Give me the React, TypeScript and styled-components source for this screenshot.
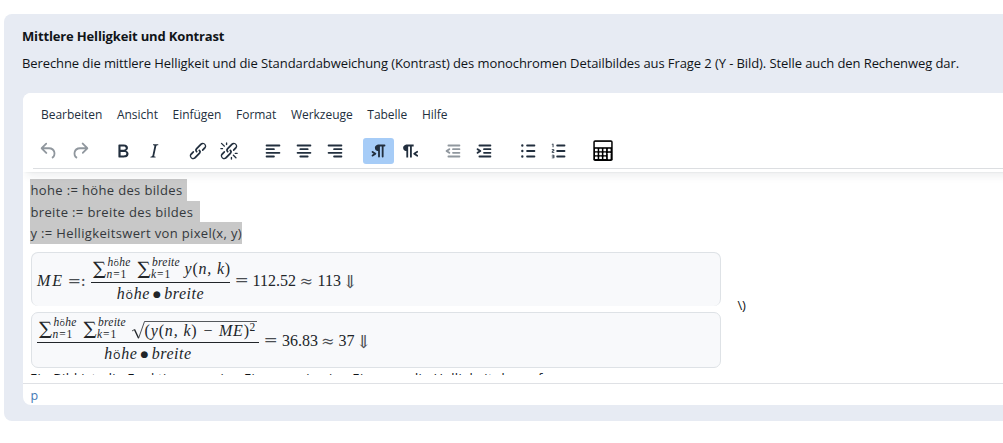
import React from 'react';
import styled, { createGlobalStyle, css } from 'styled-components';

const Global = createGlobalStyle`
  * { box-sizing: border-box; }
  html, body { margin: 0; background: #fff; overflow: hidden; }
  body { font-family: "Open Sans", "Noto Sans", sans-serif; color: #101418; }
`;

const Page = styled.main`
  height: 443px;
  padding: 14px 0 22px 4px;
  overflow: hidden;
`;

const Card = styled.section`
  height: 407px;
  padding: 12px 0 16px 18px;
  border-radius: 8px 0 0 8px;
  background: #e7ebf3;
`;

const Title = styled.h1`
  margin: 0;
  height: 20px;
  font-size: 13px;
  line-height: 20px;
  font-weight: 700;
  letter-spacing: -0.15px;
  white-space: nowrap;
`;

const Question = styled.p`
  margin: 7px 0 20px;
  height: 20px;
  font-size: 13px;
  line-height: 20px;
  letter-spacing: -0.088px;
  white-space: nowrap;
`;

const Editor = styled.div`
  display: flex;
  flex-direction: column;
  height: 312px;
  margin-left: 1px;
  border-radius: 8px 0 0 8px;
  background: #fff;
  overflow: hidden;
`;

const Header = styled.header`
  position: relative;
  z-index: 1;
  flex: none;
  height: 79px;
  margin-right: -12px;
  background: #fff;
  box-shadow: 0 2px 2px -2px rgba(34, 47, 62, 0.1), 0 8px 8px -4px rgba(34, 47, 62, 0.08);
`;

const MenuBar = styled.nav`
  display: flex;
  gap: 14.6px;
  height: 43px;
  padding: 13px 0 0 18px;
`;

const MenuItem = styled.span`
  font-size: 12px;
  line-height: 18px;
  letter-spacing: -0.02px;
  color: #222f3e;
  white-space: nowrap;
`;

const Toolbar = styled.div`
  display: flex;
  gap: 12.8px;
  height: 33px;
  margin-left: 10px;
  padding-top: 2px;
  border-bottom: 1px solid #dcdee1;
`;

const Group = styled.div`
  display: flex;
`;

const ToolButton = styled.button<{ $active?: boolean; $muted?: boolean }>`
  display: flex;
  align-items: center;
  justify-content: center;
  width: 31px;
  height: 26px;
  padding: 0;
  border: 0;
  border-radius: 3px;
  background: ${p => (p.$active ? '#a6ccf7' : 'transparent')};
  color: ${p => (p.$muted ? 'rgba(34, 47, 62, 0.5)' : '#222f3e')};
`;

const Glyph = styled.svg`
  display: block;
  flex: none;
  width: 22px;
  height: 22px;
  fill: currentColor;
`;

const Content = styled.div`
  display: flex;
  flex: none;
  height: 203px;
  padding: 7px 0 0 7px;
  overflow: hidden;
`;

const Document = styled.div`
  width: 691px;
  flex: none;
`;

const Line = styled.p`
  display: flex;
  margin: 0;
  height: 21.6px;
`;

const Selected = styled.span<{ $tail?: number }>`
  height: 22px;
  padding: 0 ${p => p.$tail ?? 0}px 0 0.5px;
  background: #c8c8c8;
  color: #34383c;
  font-size: 13px;
  line-height: 22.5px;
  letter-spacing: 0.35px;
  white-space: pre;
`;

const Formula = styled.div<{ $open?: boolean }>`
  display: flex;
  align-items: flex-start;
  height: ${p => (p.$open ? 54.2 : 56)}px;
  margin: ${p => (p.$open ? '8px 0 5.8px 1px' : '0 0 0 1px')};
  padding-left: 5px;
  border: 1px solid #dee2e6;
  ${p => p.$open && css`border-bottom-width: 0;`}
  border-radius: 7px;
  background: #f8f9fb;
  color: #212529;
  font-family: "Liberation Serif", "Times New Roman", serif;
  font-size: 16px;
  line-height: 18px;
  white-space: nowrap;
`;

const Inline = styled.span`
  display: flex;
  padding-top: 19px;
`;

const Atom = styled.span<{ $w: number; $italic?: boolean; $track?: number }>`
  flex: none;
  width: ${p => p.$w}px;
  font-style: ${p => (p.$italic ? 'italic' : 'normal')};
  letter-spacing: ${p => p.$track ?? 0}px;
`;

const Operator = styled(Atom)`
  font-family: "DejaVu Math TeX Gyre", "DejaVu Serif", serif;
  height: 18px;
  color: #4a4e52;
`;

const Equals = styled(Operator)`
  padding-left: 5px;
  font-size: 17px;
`;

const Fraction = styled.span<{ $w: number }>`
  display: flex;
  flex-direction: column;
  flex: none;
  width: ${p => p.$w}px;
`;

const Numerator = styled.span`
  display: flex;
  height: 30px;
  border-bottom: 1px solid #212529;
  padding-left: 1px;
`;

const Denominator = styled.span`
  display: flex;
  justify-content: center;
  padding-top: 2px;
`;

const Bullet = styled.span`
  width: 14.5px;
  font-family: "DejaVu Serif", serif;
  font-size: 9px;
  text-align: center;
`;

const SumSign = styled.span`
  flex: none;
  width: 15.5px;
  height: 29px;
  padding-top: 8px;
  font-family: "DejaVu Math TeX Gyre", "DejaVu Serif", serif;
  font-size: 15.5px;
  line-height: 18px;
`;

const Scripts = styled.span<{ $w: number }>`
  display: flex;
  flex-direction: column;
  flex: none;
  width: ${p => p.$w}px;
  padding-top: 3px;
  font-size: 11.5px;
  line-height: 12px;
  font-style: italic;
  letter-spacing: 0.25px;
`;

const Lower = styled.span`
  margin-left: -1px;
  letter-spacing: 0.9px;
`;

const Upright = styled.span`
  font-style: normal;
`;

const Umlaut = styled.span`
  font-family: "Open Sans", sans-serif;
  font-style: normal;
  font-size: 0.78em;
  line-height: 1;
`;

const Body = styled(Atom)`
  padding-top: 7px;
`;

const Root = styled.svg`
  display: block;
  flex: none;
  width: 14px;
  height: 29px;
  fill: none;
  stroke: #212529;
`;

const Radicand = styled.span`
  display: flex;
  width: 112px;
  height: 20px;
  margin-top: 8px;
  border-top: 1px solid #55595d;
  line-height: 17px;
`;

const Power = styled.span`
  font-size: 11.5px;
  line-height: 11px;
`;

const Clipped = styled.p`
  margin: 0;
  height: 22px;
  font-size: 13px;
  line-height: 20px;
  letter-spacing: 0.35px;
  white-space: pre;
`;

const Closing = styled.span`
  margin: 116px 0 0 16.5px;
  font-size: 13px;
  line-height: 20px;
  letter-spacing: -0.2px;
`;

const StatusBar = styled.footer`
  flex: none;
  margin-top: 8px;
  height: 22px;
  padding-left: 7.5px;
  border-top: 1px solid #dfe1e5;
  font-size: 12.5px;
  line-height: 24px;
  color: #4478b6;
`;

const paths = {
  undo: 'M6.4 8H12c3.7 0 6.2 2 6.8 5.1.6 2.7-.4 5.6-2.3 6.8a1 1 0 0 1-1-1.8c1.1-.6 1.8-2.7 1.4-4.6-.5-2.1-2.1-3.5-4.9-3.5H6.4l3.3 3.3a1 1 0 1 1-1.4 1.4l-5-5a1 1 0 0 1 0-1.4l5-5a1 1 0 0 1 1.4 1.4L6.4 8z',
  redo: 'M17.6 10H12c-2.8 0-4.4 1.4-4.9 3.5-.4 2 .3 4 1.4 4.6a1 1 0 1 1-1 1.8c-2-1.2-2.9-4.1-2.3-6.8.6-3 3-5.1 6.8-5.1h5.6l-3.3-3.3a1 1 0 1 1 1.4-1.4l5 5a1 1 0 0 1 0 1.4l-5 5a1 1 0 0 1-1.4-1.4l3.3-3.3z',
  bold: 'M7.8 19c-.3 0-.5 0-.6-.2l-.2-.5V5.7c0-.2 0-.4.2-.5l.6-.2h5c1.5 0 2.7.3 3.5 1 .7.6 1.1 1.4 1.1 2.5a3 3 0 0 1-.6 1.9c-.4.6-1 1-1.6 1.2.4.1.9.3 1.3.6s.8.7 1 1.2c.4.4.5 1 .5 1.6 0 1.3-.4 2.3-1.3 3-.8.7-2.1 1-3.8 1H7.8zm5-8.3c.6 0 1.2-.1 1.6-.5.4-.3.6-.7.6-1.3 0-1.1-.8-1.7-2.3-1.7H9.3v3.5h3.4zm.5 6c.7 0 1.3-.1 1.7-.4.4-.4.6-.9.6-1.5s-.2-1-.7-1.4c-.4-.3-1-.4-2-.4H9.4v3.8h4z',
  italic: 'M16.7 4.7l-.1.9h-.3c-.6 0-1 0-1.4.3-.3.3-.4.6-.5 1.1l-2.1 9.8v.6c0 .5.4.8 1.4.8h.2l-.2.8H8l.2-.8h.2c1.1 0 1.8-.5 2-1.5l2-9.8.1-.5c0-.6-.4-.8-1.4-.8h-.3l.2-.9h5.8z',
  link: 'M6.2 12.3a1 1 0 0 1 1.4 1.4l-2 2a2 2 0 1 0 2.6 2.8l4.8-4.8a1 1 0 0 0 0-1.4 1 1 0 1 1 1.4-1.3 2.9 2.9 0 0 1 0 4L9.6 20a3.9 3.9 0 0 1-5.5-5.5l2-2zm11.6-.6a1 1 0 0 1-1.4-1.4l2-2a2 2 0 1 0-2.6-2.8L11 10.3a1 1 0 0 0 0 1.4A1 1 0 1 1 9.6 13a2.9 2.9 0 0 1 0-4L14.4 4a3.9 3.9 0 0 1 5.5 5.5l-2 2z',
  sparks: 'M7.6 6.3a.8.8 0 0 1-1 1.1L3.3 4.2a.7.7 0 1 1 1-1l3.2 3.1zM5.1 8.6a.8.8 0 0 1 0 1.5H3a.8.8 0 0 1 0-1.5H5zm5-3.5a.8.8 0 0 1-1.5 0V3a.8.8 0 0 1 1.5 0V5zm6 11.8a.8.8 0 0 1 1-1l3.2 3.2a.8.8 0 0 1-1 1L16 17zm-2.2 2a.8.8 0 0 1 1.5 0V21a.8.8 0 0 1-1.5 0V19zm5-3.5a.7.7 0 1 1 0-1.5H21a.8.8 0 0 1 0 1.5H19z',
  left: 'M5 5h14a1 1 0 0 1 0 2H5a1 1 0 1 1 0-2zm0 4h8a1 1 0 0 1 0 2H5a1 1 0 1 1 0-2zm0 8h8a1 1 0 0 1 0 2H5a1 1 0 0 1 0-2zm0-4h14a1 1 0 0 1 0 2H5a1 1 0 0 1 0-2z',
  center: 'M5 5h14a1 1 0 0 1 0 2H5a1 1 0 1 1 0-2zm3 4h8a1 1 0 0 1 0 2H8a1 1 0 1 1 0-2zm0 8h8a1 1 0 0 1 0 2H8a1 1 0 0 1 0-2zm-3-4h14a1 1 0 0 1 0 2H5a1 1 0 0 1 0-2z',
  right: 'M5 5h14a1 1 0 0 1 0 2H5a1 1 0 1 1 0-2zm6 4h8a1 1 0 0 1 0 2h-8a1 1 0 0 1 0-2zm0 8h8a1 1 0 0 1 0 2h-8a1 1 0 0 1 0-2zm-6-4h14a1 1 0 0 1 0 2H5a1 1 0 0 1 0-2z',
  ltr: 'M11 5h7a1 1 0 0 1 0 2h-1v11a1 1 0 0 1-2 0V7h-2v11a1 1 0 0 1-2 0v-6c-.5 0-1 0-1.4-.3A3.4 3.4 0 0 1 7.8 10a3.3 3.3 0 0 1 0-2.8 3.4 3.4 0 0 1 1.8-1.8L11 5zM4.4 16.2L6.2 15l-1.8-1.2a1 1 0 0 1 1.2-1.6l3 2a1 1 0 0 1 0 1.6l-3 2a1 1 0 1 1-1.2-1.6z',
  rtl: 'M8 5h8v2h-2v12h-2V7h-2v12H8v-7c-.5 0-1 0-1.4-.3A3.4 3.4 0 0 1 4.8 10a3.3 3.3 0 0 1 0-2.8 3.4 3.4 0 0 1 1.8-1.8L8 5zm12 11.2a1 1 0 1 1-1 1.6l-3-2a1 1 0 0 1 0-1.6l3-2a1 1 0 1 1 1 1.6L18.4 15l1.8 1.2z',
  outdent: 'M7 5h12a1 1 0 0 1 0 2H7a1 1 0 1 1 0-2zm5 4h7a1 1 0 0 1 0 2h-7a1 1 0 0 1 0-2zm0 4h7a1 1 0 0 1 0 2h-7a1 1 0 0 1 0-2zm-5 4h12a1 1 0 0 1 0 2H7a1 1 0 0 1 0-2zm1.6-3.8a1 1 0 0 1-1.2 1.6l-3-2a1 1 0 0 1 0-1.6l3-2a1 1 0 0 1 1.2 1.6L6.8 12l1.8 1.2z',
  indent: 'M7 5h12a1 1 0 0 1 0 2H7a1 1 0 1 1 0-2zm5 4h7a1 1 0 0 1 0 2h-7a1 1 0 0 1 0-2zm0 4h7a1 1 0 0 1 0 2h-7a1 1 0 0 1 0-2zm-5 4h12a1 1 0 0 1 0 2H7a1 1 0 0 1 0-2zm-2.6-3.8L6.2 12l-1.8-1.2a1 1 0 0 1 1.2-1.6l3 2a1 1 0 0 1 0 1.6l-3 2a1 1 0 1 1-1.2-1.6z',
  bullets: 'M11 5h8a1 1 0 0 1 0 2h-8a1 1 0 0 1 0-2zm0 6h8a1 1 0 0 1 0 2h-8a1 1 0 0 1 0-2zm0 6h8a1 1 0 0 1 0 2h-8a1 1 0 0 1 0-2zM4.5 6a1.3 1.3 0 1 1 2.6 0 1.3 1.3 0 0 1-2.6 0zm0 6a1.3 1.3 0 1 1 2.6 0 1.3 1.3 0 0 1-2.6 0zm0 6a1.3 1.3 0 1 1 2.6 0 1.3 1.3 0 0 1-2.6 0z',
  numbers: 'M10 17h8a1 1 0 0 1 0 2h-8a1 1 0 0 1 0-2zm0-6h8a1 1 0 0 1 0 2h-8a1 1 0 0 1 0-2zm0-6h8a1 1 0 1 1 0 2h-8a1 1 0 1 1 0-2zM6 4v3.5c0 .3-.2.5-.5.5a.5.5 0 0 1-.5-.5V5h-.5a.5.5 0 0 1 0-1H6zm-1 8.8l.2.2h1.3c.3 0 .5.2.5.5s-.2.5-.5.5H4.9a1 1 0 0 1-.9-1V13c0-.4.3-.8.6-1l1.2-.4.2-.3a.2.2 0 0 0-.2-.2H4.5a.5.5 0 0 1-.5-.5c0-.3.2-.5.5-.5h1.6c.5 0 .9.4.9 1v.1c0 .4-.3.8-.6 1l-1.2.4-.2.3zM7 17v2c0 .6-.4 1-1 1H4.5a.5.5 0 0 1 0-1h1.2c.2 0 .3-.1.3-.3 0-.2-.1-.3-.3-.3H4.4a.4.4 0 1 1 0-.8h1.3c.2 0 .3-.1.3-.3 0-.2-.1-.3-.3-.3H4.5a.5.5 0 1 1 0-1H6c.6 0 1 .4 1 1z',
};

type IconName = keyof typeof paths;

const Icon = ({ name }: { name: IconName }) => (
  <Glyph viewBox="0 0 24 24">
    <path d={paths[name]} fillRule={name === 'bold' ? 'evenodd' : 'nonzero'} />
  </Glyph>
);

const Unlink = () => (
  <Glyph viewBox="0 0 24 24">
    <path d={paths.link} />
    <path d={paths.sparks} />
  </Glyph>
);

const Calculator = () => (
  <Glyph viewBox="0 0 22 22">
    <rect x="1.3" y="0.3" width="19.4" height="20.7" rx="1.8" fill="#000" />
    <rect x="2.8" y="1.9" width="16.4" height="5.3" fill="#fff" />
    {[8.7, 12.6, 16.5].map(y =>
      [3, 7.2, 11.4].map(x => <rect key={`${x}-${y}`} x={x} y={y} width="2.7" height="2.6" rx="0.4" fill="#fff" />),
    )}
    <rect x="15.8" y="8.7" width="2.8" height="2.6" rx="0.4" fill="#fff" />
    <rect x="15.8" y="12.8" width="2.8" height="6.4" rx="0.4" fill="#fff" />
  </Glyph>
);

const Hoehe = () => (
  <>h<Umlaut>ö</Umlaut>he</>
);

const Sum = ({ index, upper, width }: { index: string; upper: React.ReactNode; width: number }) => (
  <>
    <SumSign>∑</SumSign>
    <Scripts $w={width}>
      <span>{upper}</span>
      <Lower>{index}<Upright>=1</Upright></Lower>
    </Scripts>
  </>
);

const Sums = () => (
  <>
    <Sum index="n" upper={<Hoehe />} width={29} />
    <Sum index="k" upper="breite" width={32.5} />
  </>
);

const Value = () => (
  <>y<Upright>(</Upright>n, k<Upright>)</Upright></>
);

const Size = () => (
  <Denominator>
    <Atom $w={33} $italic $track={0.7}><Hoehe /></Atom>
    <Bullet>●</Bullet>
    <Atom $w={40} $italic $track={0.5}>breite</Atom>
  </Denominator>
);

const menu = ['Bearbeiten', 'Ansicht', 'Einfügen', 'Format', 'Werkzeuge', 'Tabelle', 'Hilfe'];

export default function App() {
  return (
    <Page>
      <Global />
      <Card>
        <Title>Mittlere Helligkeit und Kontrast</Title>
        <Question>
          Berechne die mittlere Helligkeit und die Standardabweichung (Kontrast) des monochromen Detailbildes aus Frage 2 (Y - Bild). Stelle auch den Rechenweg dar.
        </Question>
        <Editor>
          <Header>
            <MenuBar>
              {menu.map(m => <MenuItem key={m}>{m}</MenuItem>)}
            </MenuBar>
            <Toolbar>
              <Group>
                <ToolButton $muted><Icon name="undo" /></ToolButton>
                <ToolButton $muted><Icon name="redo" /></ToolButton>
              </Group>
              <Group>
                <ToolButton><Icon name="bold" /></ToolButton>
                <ToolButton><Icon name="italic" /></ToolButton>
              </Group>
              <Group>
                <ToolButton><Icon name="link" /></ToolButton>
                <ToolButton><Unlink /></ToolButton>
              </Group>
              <Group>
                <ToolButton><Icon name="left" /></ToolButton>
                <ToolButton><Icon name="center" /></ToolButton>
                <ToolButton><Icon name="right" /></ToolButton>
              </Group>
              <Group>
                <ToolButton $active><Icon name="ltr" /></ToolButton>
                <ToolButton><Icon name="rtl" /></ToolButton>
              </Group>
              <Group>
                <ToolButton $muted><Icon name="outdent" /></ToolButton>
                <ToolButton><Icon name="indent" /></ToolButton>
              </Group>
              <Group>
                <ToolButton><Icon name="bullets" /></ToolButton>
                <ToolButton><Icon name="numbers" /></ToolButton>
              </Group>
              <Group>
                <ToolButton><Calculator /></ToolButton>
              </Group>
            </Toolbar>
          </Header>
          <Content>
            <Document>
              <Line><Selected $tail={4.5}>hohe := höhe des bildes</Selected></Line>
              <Line><Selected $tail={7}>breite := breite des bildes</Selected></Line>
              <Line><Selected>y := Helligkeitswert von pixel(x, y)</Selected></Line>
              <Formula $open>
                <Inline>
                  <Atom $w={31} $italic $track={2}>ME</Atom>
                  <Operator $w={23}>=:</Operator>
                </Inline>
                <Fraction $w={139}>
                  <Numerator>
                    <Sums />
                    <Body $w={46} $italic $track={0.8}><Value /></Body>
                  </Numerator>
                  <Size />
                </Fraction>
                <Inline>
                  <Equals $w={22.5}>=</Equals>
                  <Atom $w={47.5}>112.52</Atom>
                  <Operator $w={17.5}>≈</Operator>
                  <Atom $w={27.5}>113</Atom>
                  <Operator $w={11}>⇓</Operator>
                </Inline>
              </Formula>
              <Formula>
                <Fraction $w={222}>
                  <Numerator>
                    <Sums />
                    <Root viewBox="0 0 14 29">
                      <path d="M1 18l2.5-1.5" strokeWidth="0.8" />
                      <path d="M3.5 16.5l4 8.5" strokeWidth="1.4" />
                      <path d="M7.5 25.5L13.5 8.5H14" strokeWidth="0.8" />
                    </Root>
                    <Radicand>
                      <Atom $w={105} $italic $track={0.85}><Upright>(</Upright><Value /> − ME<Upright>)</Upright></Atom>
                      <Power>2</Power>
                    </Radicand>
                  </Numerator>
                  <Size />
                </Fraction>
                <Inline>
                  <Equals $w={23}>=</Equals>
                  <Atom $w={39.5}>36.83</Atom>
                  <Operator $w={17}>≈</Operator>
                  <Atom $w={20}>37</Atom>
                  <Operator $w={11}>⇓</Operator>
                </Inline>
              </Formula>
              <Clipped>Ein Bild ist, die Funktion nur eine Eins, so wie eine Eins, um die Helligkeit der aufgenommenen</Clipped>
            </Document>
            <Closing>\)</Closing>
          </Content>
          <StatusBar>p</StatusBar>
        </Editor>
      </Card>
    </Page>
  );
}
